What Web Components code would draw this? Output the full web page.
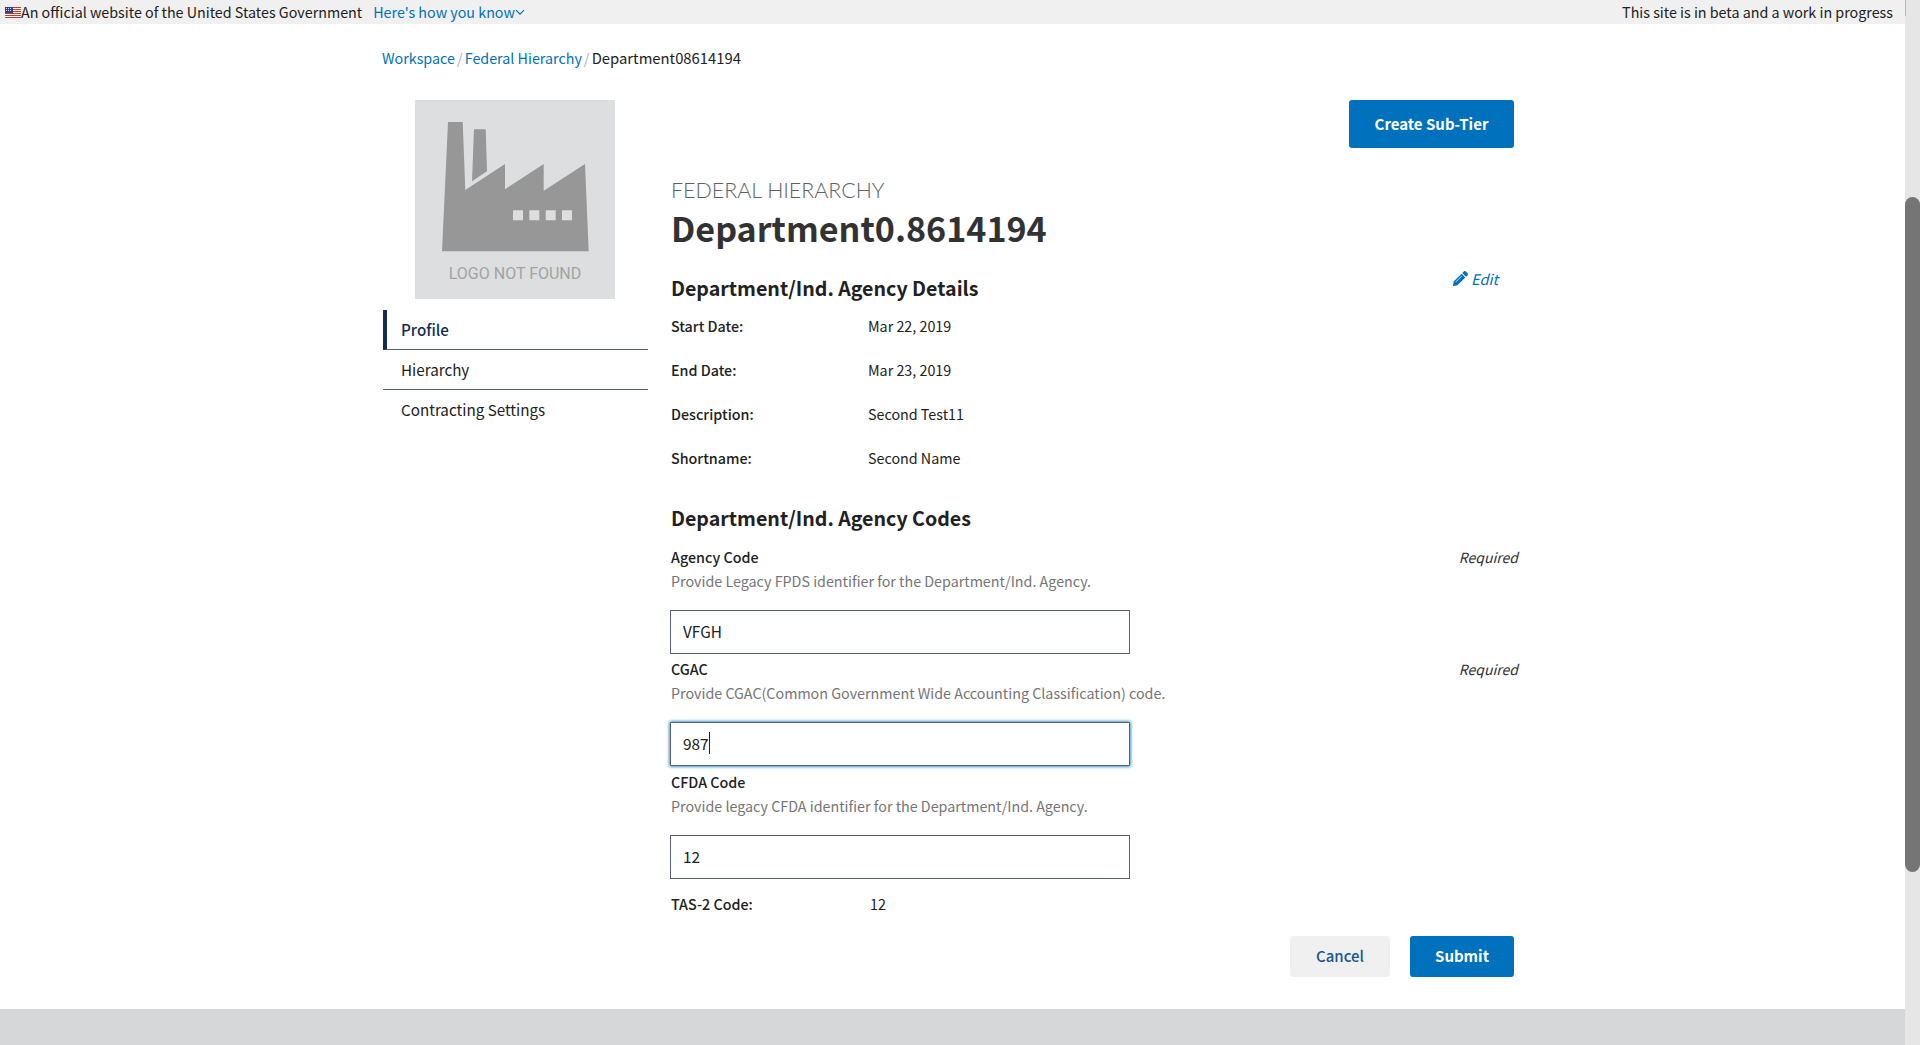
<!DOCTYPE html>
<html lang="en">
<head>
<meta charset="utf-8">
<title>Department0.8614194</title>
<style>
  html, body { margin: 0; height: 100%; overflow: hidden; background: #fff; }
  body { font-family: "Noto Sans CJK SC", "Noto Sans", sans-serif; font-size: 14.3px; color: #212121; }
</style>
</head>
<body>
<app-shell>
  <gov-banner></gov-banner>
  <page-body>
    <bread-crumbs current="Department08614194">
      <a>Workspace</a>
      <a>Federal Hierarchy</a>
    </bread-crumbs>
    <div slot="side">
      <logo-placeholder></logo-placeholder>
      <side-nav>
        <nav-item active>Profile</nav-item>
        <nav-item>Hierarchy</nav-item>
        <nav-item>Contracting Settings</nav-item>
      </side-nav>
    </div>
    <hierarchy-profile slot="main">
      <app-button slot="action">Create Sub-Tier</app-button>
      <detail-row label="Start Date:">Mar 22, 2019</detail-row>
      <detail-row label="End Date:">Mar 23, 2019</detail-row>
      <detail-row label="Description:">Second Test11</detail-row>
      <detail-row label="Shortname:">Second Name</detail-row>
      <code-field slot="codes" label="Agency Code" hint="Provide Legacy FPDS identifier for the Department/Ind. Agency." value="VFGH" required></code-field>
      <code-field slot="codes" label="CGAC" hint="Provide CGAC(Common Government Wide Accounting Classification) code." value="987" required focused></code-field>
      <code-field slot="codes" label="CFDA Code" hint="Provide legacy CFDA identifier for the Department/Ind. Agency." value="12"></code-field>
      <detail-row slot="tas" label="TAS-2 Code:" tight>12</detail-row>
      <app-button slot="footer" kind="secondary" width="100">Cancel</app-button>
      <app-button slot="footer" width="104">Submit</app-button>
    </hierarchy-profile>
  </page-body>
  <page-footer></page-footer>
</app-shell>

<script>
  const define = (name, html) => {
    customElements.define(name, class extends HTMLElement {
      constructor() {
        super();
        this.attachShadow({ mode: 'open' }).innerHTML = typeof html === 'function' ? html(this) : html;
      }
    });
  };

  define('app-shell', `
    <style>
      :host { display: flex; height: 1045px; }
      .col { flex: 1; min-width: 0; display: flex; flex-direction: column; height: 1045px; overflow: hidden; }
      .track { width: 15px; background: #e6e6e6; flex: none; display: flex; flex-direction: column; }
      .arrow { width: 1px; height: 16px; background: #b9b9b9; }
      .thumb { margin-top: 181px; height: 675px; background: #757575; border-radius: 8px; }
    </style>
    <div class="col"><slot></slot></div>
    <div class="track"><div class="arrow"></div><div class="thumb"></div></div>
  `);

  define('gov-banner', `
    <style>
      :host { display: flex; flex: none; justify-content: space-between; align-items: center; height: 24px; background: #f0f0f0; padding: 0 12px 0 5px; font-size: 14.3px; line-height: 24px; color: #212121; }
      .left { display: flex; align-items: center; }
      svg { display: block; }
      a { color: #0071bc; margin-left: 11px; }
    </style>
    <div class="left">
      <svg width="16" height="11" viewBox="0 0 16 11" shape-rendering="crispEdges">
        <rect width="16" height="11" fill="#fff"/>
        <path d="M0 .5h16M0 2.5h16M0 4.5h16M0 6.5h16M0 8.5h16M0 10.5h16" stroke="#c0392b" stroke-width="1"/>
        <rect width="8" height="6" fill="#2f3f94"/>
        <path d="M1 1.5h6M1 3.5h6" stroke="#d5d9f2" stroke-width="1" stroke-dasharray="1 1"/>
      </svg>
      <span>An official website of the United States Government</span>
      <a>Here's how you know</a>
      <svg width="10" height="7" viewBox="0 0 10 7"><path d="M1 1.2l4 4 4-4" fill="none" stroke="#0071bc" stroke-width="1.2"/></svg>
    </div>
    <span>This site is in beta and a work in progress</span>
  `);

  define('page-body', `
    <style>
      :host { display: block; flex: 1; padding: 0 0 0 382px; }
      .wrap { width: 1132px; }
      .cols { display: grid; grid-template-columns: 266px 843px; column-gap: 23px; margin-top: 22px; }
    </style>
    <div class="wrap">
      <slot></slot>
      <div class="cols">
        <div><slot name="side"></slot></div>
        <div><slot name="main"></slot></div>
      </div>
    </div>
  `);

  define('bread-crumbs', (el) => `
    <style>
      :host { display: block; padding-top: 22px; height: 32px; line-height: 24px; font-size: 14.3px; }
      ::slotted(a) { color: #0071bc; }
      ::slotted(a)::after { content: "/"; color: #aeb0b5; margin: 0 -1px 0 2px; }
      b { font-weight: 400; font-size: 14.8px; color: #212121; }
    </style>
    <slot></slot><b>${el.getAttribute('current')}</b>
  `);

  define('logo-placeholder', `
    <style>
      :host { display: block; width: 200px; height: 199px; margin: 0 0 11px 33px; background: #dcdee0; text-align: center; }
      svg { display: block; }
      span { display: block; font: 400 16px/24px Roboto, sans-serif; color: #a3a3a3; margin-top: 2px; }
    </style>
    <svg width="200" height="160" viewBox="0 0 200 160">
      <path fill="#979797" d="M33 22h14.7l2.6 68L90 64v25.3L128.7 64v26.7L170 64l3.7 87.3H27z"/>
      <path fill="#979797" d="M59 29.3h11.7L72 71.3 57 81.3z"/>
      <path fill="#dcdee0" d="M98 110.3h10v10H98zM114.3 110.3h10v10h-10zM130.7 110.3h10v10h-10zM147 110.3h10v10h-10z"/>
    </svg>
    <span>LOGO NOT FOUND</span>
  `);

  define('side-nav', `
    <style>:host { display: block; width: 265px; margin-left: 1px; }</style>
    <slot></slot>
  `);

  define('nav-item', `
    <style>
      :host { display: block; height: 39px; line-height: 38px; padding-left: 18px; font-size: 15.2px; color: #212121; border-bottom: 1px solid #5b616b; }
      :host(:last-child) { border-bottom: 0; }
      :host([active]) { padding-left: 14px; border-left: 4px solid #112e51; font-weight: 500; color: #112e51; }
    </style>
    <slot></slot>
  `);

  define('hierarchy-profile', `
    <style>
      :host { display: block; }
      .action { display: flex; justify-content: flex-end; height: 48px; }
      .eyebrow { margin-top: 29px; font: 300 21.4px/26px Lato, sans-serif; color: #5b616b; }
      h1 { margin: 0; font: 700 34.1px/48px "Noto Sans CJK SC", sans-serif; color: #323232; }
      h2 { margin: 0; font: 700 19.6px/28px "Noto Sans CJK SC", sans-serif; color: #212121; }
      .details-head { display: flex; justify-content: space-between; margin-top: 23px; }
      .edit { display: flex; align-items: center; gap: 3px; height: 24px; margin: -8px 16px 0 0; color: #0071bc; font-style: italic; font-size: 14.6px; }
      .details { margin-top: 12px; }
      .codes-head { margin-top: 14px; }
      .codes { margin-top: 13px; }
      .foot { display: flex; justify-content: flex-end; gap: 20px; margin-top: 16px; }
    </style>
    <div class="action"><slot name="action"></slot></div>
    <div class="eyebrow">FEDERAL HIERARCHY</div>
    <h1>Department0.8614194</h1>
    <div class="details-head">
      <h2>Department/Ind. Agency Details</h2>
      <div class="edit">
        <svg width="15" height="15" viewBox="0 0 512 512">
          <path fill="#0071bc" d="M497.9 142.1l-46.1 46.1c-4.7 4.7-12.3 4.7-17 0l-111-111c-4.7-4.7-4.7-12.3 0-17l46.1-46.1c18.7-18.7 49.1-18.7 67.9 0l60.1 60.1c18.8 18.7 18.8 49.1 0 67.9zM284.2 99.8L21.6 362.4.4 483.9c-2.9 16.4 11.4 30.6 27.8 27.8l121.5-21.3 262.6-262.6c4.7-4.7 4.7-12.3 0-17l-111-111c-4.8-4.7-12.4-4.7-17.1 0z"/>
          <path stroke="#fff" stroke-width="26" d="M90 380L300 170"/>
        </svg>
        <span>Edit</span>
      </div>
    </div>
    <div class="details"><slot></slot></div>
    <div class="codes-head"><h2>Department/Ind. Agency Codes</h2></div>
    <div class="codes"><slot name="codes"></slot></div>
    <slot name="tas"></slot>
    <div class="foot"><slot name="footer"></slot></div>
  `);

  define('detail-row', (el) => `
    <style>
      :host { display: grid; grid-template-columns: 197px 1fr; height: 44px; line-height: 24px; font-size: 14.3px; color: #212121; }
      :host([tight]) { grid-template-columns: 199px 1fr; height: 28px; margin-top: 10px; }
      b { font-weight: 500; }
    </style>
    <b>${el.getAttribute('label')}</b>
    <span><slot></slot></span>
  `);

  define('code-field', (el) => `
    <style>
      :host { display: block; height: 112px; line-height: 24px; font-size: 14.3px; }
      :host([focused]) { height: 113px; }
      .top { display: flex; justify-content: space-between; width: 847px; }
      label { font-weight: 500; color: #212121; }
      i { color: #323232; font-size: 14px; }
      .hint { color: #757575; }
      .box { box-sizing: border-box; width: 460px; height: 44px; margin: 17px 0 0 -1px; padding: 0 12px 3px; border: 1px solid #5b616b; background: #fff; line-height: 38px; font-size: 15.4px; color: #212121; display: flex; align-items: center; }
      :host([focused]) .box { box-shadow: 0 0 3px 1px #3e94cf; border-radius: 1px; }
      .caret { width: 1px; height: 22px; background: #212121; }
    </style>
    <div class="top"><label>${el.getAttribute('label')}</label>${el.hasAttribute('required') ? '<i>Required</i>' : ''}</div>
    <div class="hint">${el.getAttribute('hint')}</div>
    <div class="box" role="textbox"><span>${el.getAttribute('value')}</span>${el.hasAttribute('focused') ? '<span class="caret"></span>' : ''}</div>
  `);

  define('app-button', (el) => `
    <style>
      :host { display: inline-flex; align-items: center; justify-content: center; box-sizing: border-box; padding-bottom: 2px; height: ${el.hasAttribute('width') ? 41 : 48}px; width: ${el.getAttribute('width') || 165}px; border-radius: 3px; font-size: 15px; font-weight: 700; background: #0071bc; color: #fff; }
      :host([kind="secondary"]) { background: #f0f0f0; color: #205493; font-weight: 500; }
    </style>
    <slot></slot>
  `);

  define('page-footer', `
    <style>:host { display: block; flex: none; height: 36px; background: #d6d7d9; }</style>
  `);
</script>
</body>
</html>
